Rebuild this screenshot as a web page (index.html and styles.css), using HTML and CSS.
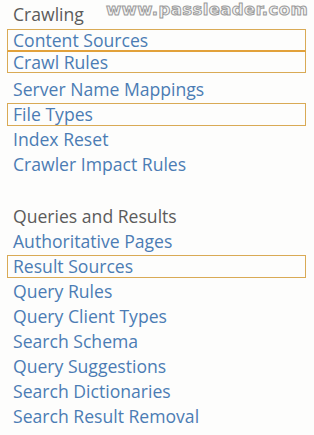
FILE: index.html
```html
<!DOCTYPE html>
<html lang="en">
<head>
    <meta charset="UTF-8">
    <meta name="viewport" content="width=device-width, initial-scale=1.0">
    <title>Search Administration</title>
    <link rel="stylesheet" href="styles.css">
</head>
<body>
    <div class="watermark">www.passleader.com</div>

    <div class="nav">
        <div class="group">
            <div class="group-title">Crawling</div>
            <ul>
                <li class="marked pair-top"><a href="#">Content Sources</a></li>
                <li class="marked pair-bottom"><a href="#">Crawl Rules</a></li>
                <li><a href="#">Server Name Mappings</a></li>
                <li class="marked"><a href="#">File Types</a></li>
                <li><a href="#">Index Reset</a></li>
                <li><a href="#">Crawler Impact Rules</a></li>
            </ul>
        </div>

        <div class="group">
            <div class="group-title">Queries and Results</div>
            <ul>
                <li><a href="#">Authoritative Pages</a></li>
                <li class="marked"><a href="#">Result Sources</a></li>
                <li><a href="#">Query Rules</a></li>
                <li><a href="#">Query Client Types</a></li>
                <li><a href="#">Search Schema</a></li>
                <li><a href="#">Query Suggestions</a></li>
                <li><a href="#">Search Dictionaries</a></li>
                <li><a href="#">Search Result Removal</a></li>
            </ul>
        </div>
    </div>
</body>
</html>
```

FILE: styles.css
```css
body {
    margin: 0;
    padding: 0;
    background-color: #fdfdfc;
    font-family: "Open Sans", "Noto Sans", sans-serif;
    font-size: 17.6px;
    position: relative;
}

.watermark {
    position: absolute;
    top: 0;
    right: 6px;
    font-family: "DejaVu Sans", sans-serif;
    font-weight: bold;
    font-size: 16.5px;
    letter-spacing: 0.4px;
    color: #f4f4f4;
    -webkit-text-stroke: 1px #9a9a9a;
}

.nav {
    padding: 2px 0 0 0;
}

.group {
    margin-bottom: 27px;
}

.group-title {
    color: #5b5b5b;
    line-height: 25px;
    padding-left: 13px;
}

ul {
    list-style: none;
    margin: 0;
    padding: 0;
}

li {
    height: 25px;
    display: flex;
    align-items: center;
}

li a {
    display: block;
    color: #4b7cb4;
    text-decoration: none;
    line-height: 21px;
    padding-left: 5px;
    margin-left: 7px;
    width: 299px;
    box-sizing: border-box;
    border: 1.5px solid transparent;
}

li.marked a {
    border-color: #d9aa55;
}

/* first two boxes share one thick line */
li.pair-top {
    align-items: flex-end;
}

li.pair-top a {
    line-height: 20px;
    border-bottom: 2px solid #e2a13a;
}

li.pair-bottom {
    align-items: flex-start;
}

li.pair-bottom a {
    line-height: 20px;
    border-top: 0;
}
```
